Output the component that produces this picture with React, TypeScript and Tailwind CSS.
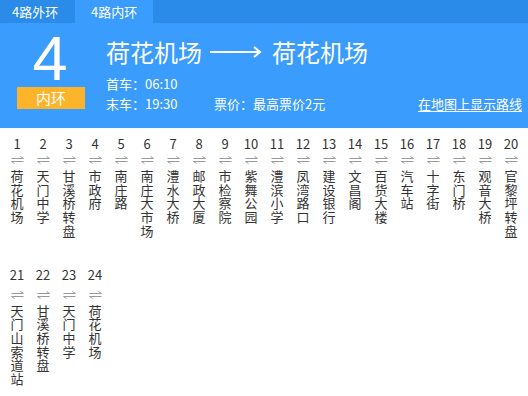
import React from "react";

const stations = [
  "荷花机场", "天门中学", "甘溪桥转盘", "市政府", "南庄路", "南庄大市场", "澧水大桥", "邮政大厦", "市检察院", "紫舞公园",
  "澧滨小学", "凤湾路口", "建设银行", "文昌阁", "百货大楼", "汽车站", "十字街", "东门桥", "观音大桥", "官黎坪转盘",
  "天门山索道站", "甘溪桥转盘", "天门中学", "荷花机场",
];

function Swap() {
  return (
    <svg width="13" height="8" viewBox="0 0 13 8" className="block">
      <path d="M0.5 2.5H12.5L9.5 0.5" fill="none" stroke="#9a9a9a" strokeWidth="1" />
      <path d="M12.5 5.5H0.5L3.5 7.5" fill="none" stroke="#9a9a9a" strokeWidth="1" />
    </svg>
  );
}

function Station({ n, name, second }: { n: number; name: string; second?: boolean }) {
  return (
    <div className="flex w-[26px] flex-col items-center">
      <div className="h-[14px] text-[13px] leading-[14px] text-[#333]">{n}</div>
      <div className={second ? "mt-[9px] h-[8px]" : "mt-[5px] h-[8px]"}>
        <Swap />
      </div>
      <div className="mt-[5px] flex flex-col items-center text-[13px] leading-[13.7px] text-[#333]">
        {name.split("").map((c, i) => (
          <span key={i}>{c}</span>
        ))}
      </div>
    </div>
  );
}

export default function App() {
  const row1 = stations.slice(0, 20);
  const row2 = stations.slice(20);
  return (
    <div
      className="h-[396px] w-[528px] overflow-hidden bg-white"
      style={{ fontFamily: '"Noto Sans CJK SC", "Noto Sans", sans-serif' }}
    >
      <div className="flex h-[23px] bg-[#2a8be9] text-[13px] leading-[23px] text-white">
        <div className="w-[75px] pl-[12px]">4路外环</div>
        <div className="w-[78px] bg-[#3a9cfc] pl-[16px]">4路内环</div>
      </div>
      <div className="flex h-[105px] bg-[#3a9cfc] text-white">
        <div className="flex w-[106px] flex-col items-start">
          <div
            className="w-[100px] pt-[7px] text-center text-[63px] leading-[56px]"
            style={{ fontFamily: '"Liberation Sans", sans-serif' }}
          >
            4
          </div>
          <div className="ml-[17px] mt-[1px] flex h-[22px] w-[68px] items-center justify-center bg-[#fdb42a] text-[15px] leading-[22px]">
            内环
          </div>
        </div>
        <div className="flex flex-1 flex-col pr-[6px]">
          <div className="mt-[14px] flex items-center text-[24px] leading-[30px]">
            <span>荷花机场</span>
            <svg width="52" height="12" viewBox="0 0 52 12" className="ml-[8px] mr-[10px]">
              <path d="M0 6H50" stroke="white" strokeWidth="2" />
              <path d="M44 1L50 6L44 11" fill="none" stroke="white" strokeWidth="2" />
            </svg>
            <span>荷花机场</span>
          </div>
          <div className="mt-[7px] text-[13px] leading-[20px]">首车：06:10</div>
          <div className="flex text-[13px] leading-[20px]">
            <span className="w-[108px]">末车：19:30</span>
            <span>票价：最高票价2元</span>
            <span className="ml-auto underline underline-offset-2">在地图上显示路线</span>
          </div>
        </div>
      </div>
      <div className="px-[4px] pt-[9px]">
        <div className="flex">
          {row1.map((s, i) => (
            <Station key={i} n={i + 1} name={s} />
          ))}
        </div>
        <div className="mt-[30px] flex">
          {row2.map((s, i) => (
            <Station key={i} n={i + 21} name={s} second />
          ))}
        </div>
      </div>
    </div>
  );
}
